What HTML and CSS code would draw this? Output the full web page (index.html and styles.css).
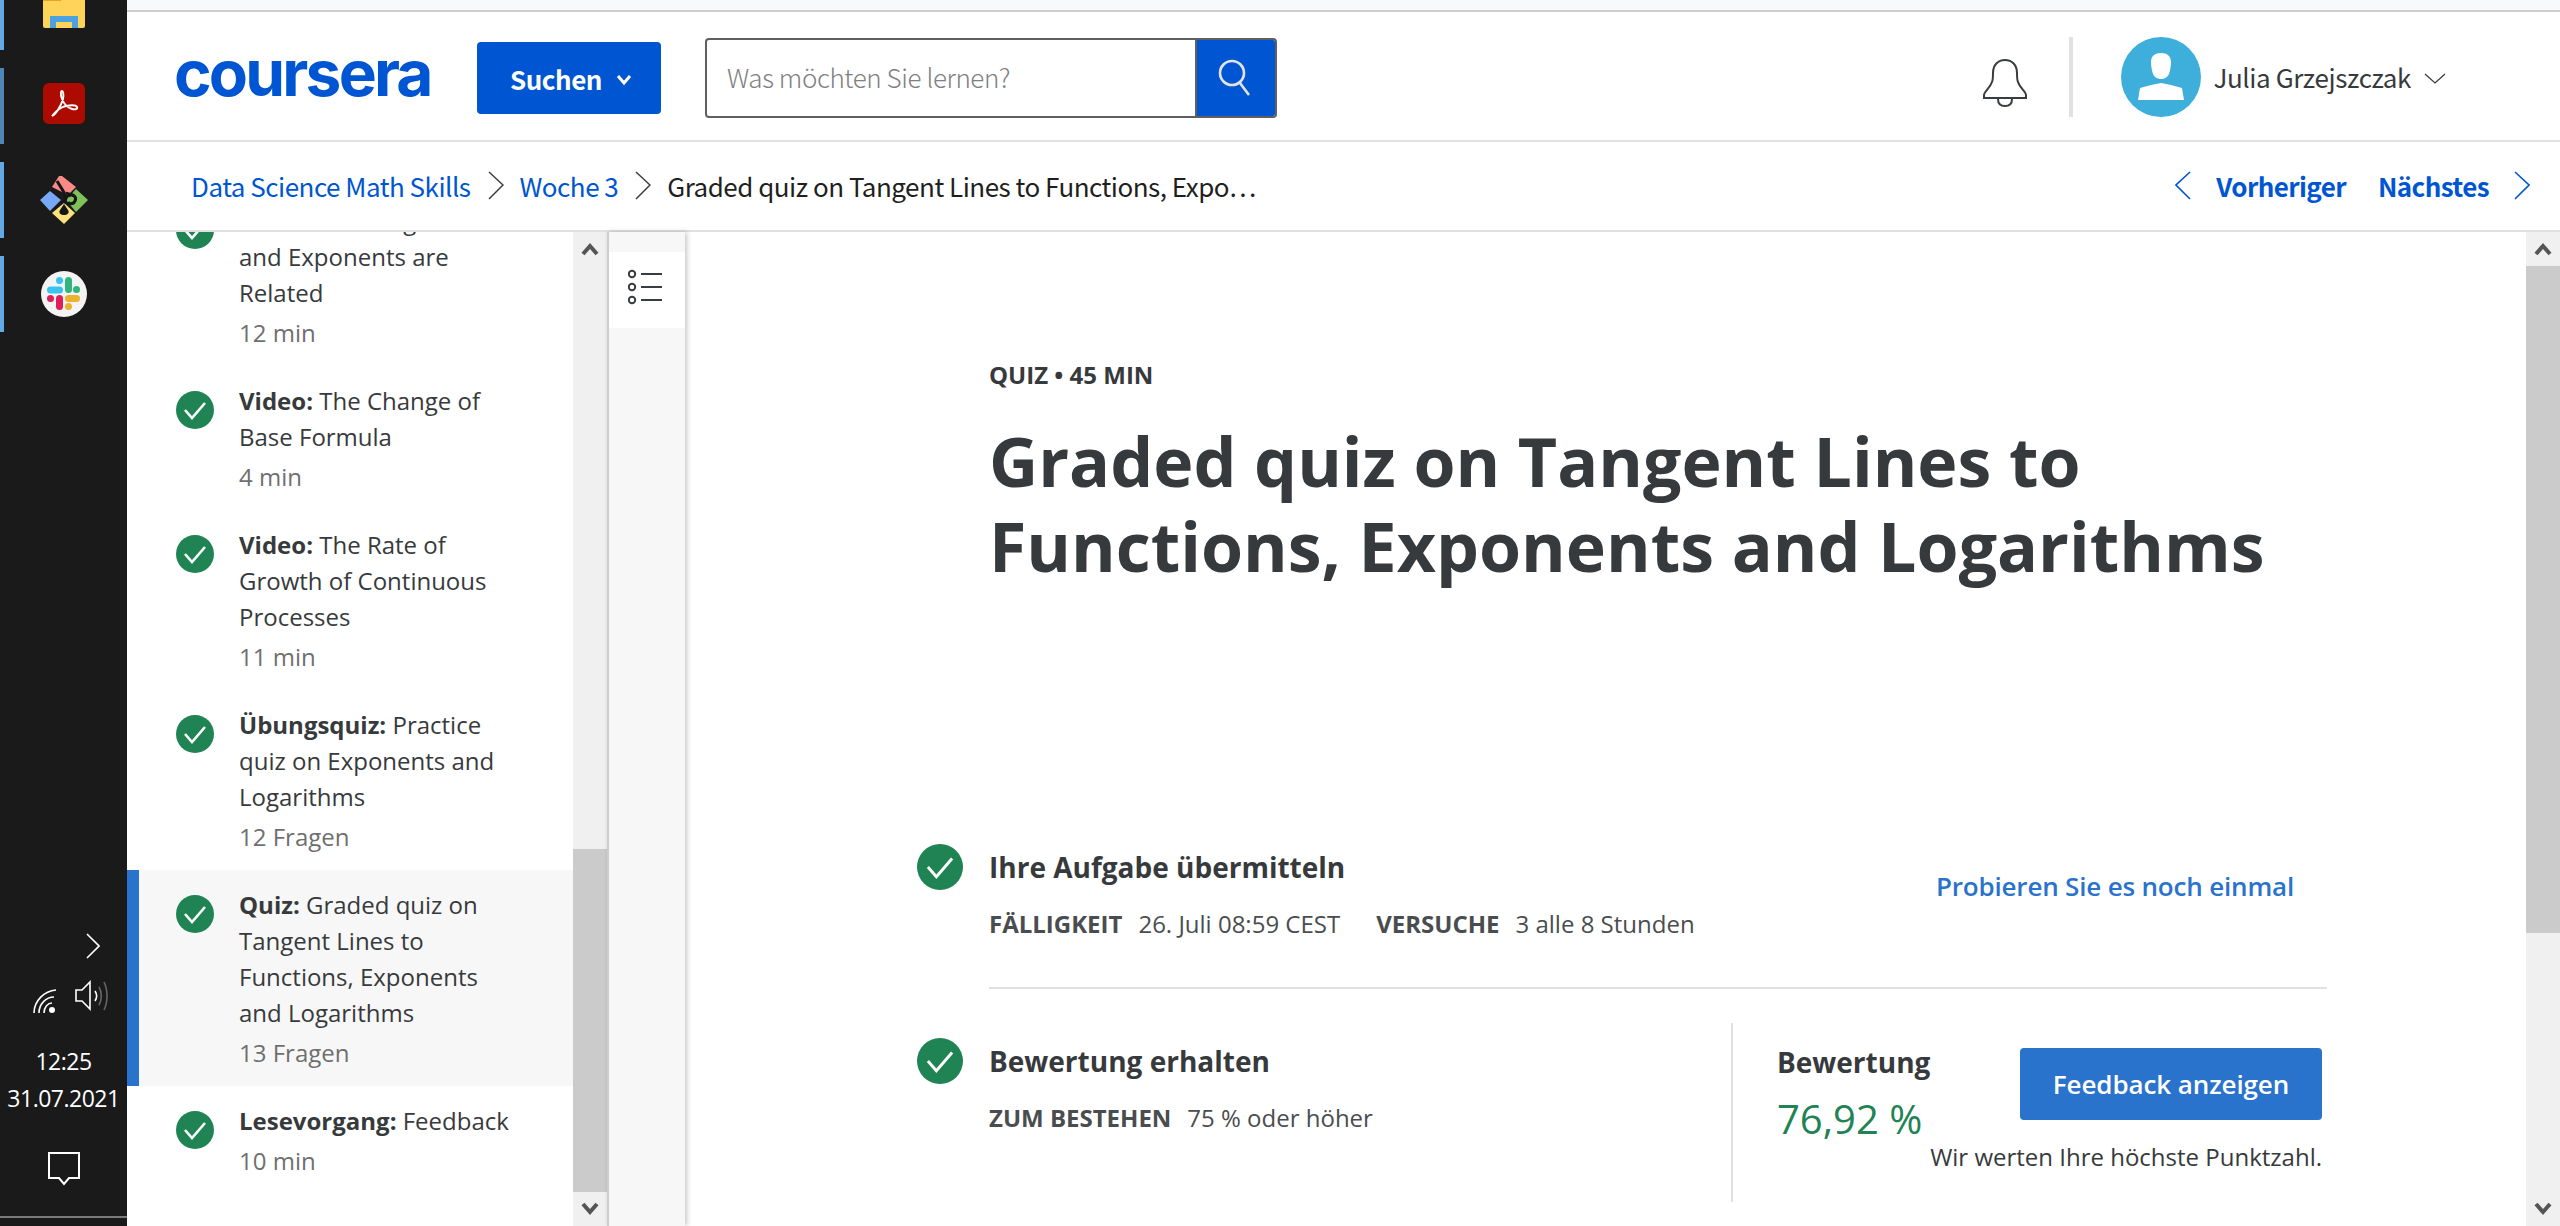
FILE: index.html
```html
<!DOCTYPE html>
<html lang="de">
<head>
<meta charset="utf-8">
<title>Graded quiz on Tangent Lines to Functions, Exponents and Logarithms</title>
<link rel="stylesheet" href="styles.css">
</head>
<body>
<div class="desktop">
  <aside class="taskbar">
    <div class="pins">
      <div class="pin pin-first">
        <svg class="ic-explorer" viewBox="0 0 42 28"><rect y="-4" width="42" height="32" rx="2" fill="#fdd35a"/><rect y="-4" width="18" height="5" fill="#e6a520"/><path d="M7 28V16h28v12h-6V22H13v6z" fill="#4aa3e0"/></svg>
      </div>
      <div class="pin pin-dark">
        <svg class="ic-pdf" viewBox="0 0 42 41"><rect width="42" height="41" rx="6" fill="#ad0b00"/><path d="M9 33c4-2 9-10 11-17 1-5 0-8-1-8s-2 3 0 8c2 5 6 9 10 10 3 1 6 0 5-2s-6-2-11-1c-5 1-10 5-14 10z" fill="none" stroke="#fff" stroke-width="1.9"/></svg>
      </div>
      <div class="pin">
        <svg class="ic-diamond" viewBox="0 0 48 48"><path d="M19 0h3l14 11-8 8-16-8z" fill="#f98a86"/><path d="M36 13l12 11-12 12-10-12z" fill="#7fc25a"/><path d="M10 15l11 9-11 11L0 24z" fill="#79a9f5"/><path d="M24 27l11 10-11 11-12-11z" fill="#fde27c"/><path d="M17 5l8 13" stroke="#161616" stroke-width="3" fill="none"/><path d="M24 18c3 2 3 5 0 9M26 17c3 1 6 1 8 3" stroke="#161616" stroke-width="2.5" fill="none"/><path d="M24 28l4 6c2 3-1 5-4 5s-6-2-4-5z" fill="#161616"/><path d="M28 20c5-3 9 1 7 5s-6 3-7 1" fill="none" stroke="#161616" stroke-width="3"/></svg>
      </div>
      <div class="pin">
        <svg class="ic-slack" viewBox="0 0 46 46"><circle cx="23" cy="23" r="23" fill="#f4f4f4"/><g stroke-width="7" stroke-linecap="round" fill="none"><path d="M9.500 19H18.500" stroke="#36c5f0"/><path d="M18.500 9.500v.1" stroke="#36c5f0"/><path d="M27.500 9.500V18.500" stroke="#2eb67d"/><path d="M35.500 18.500v.1" stroke="#2eb67d"/><path d="M27.500 27.500H35.500" stroke="#ecb22e"/><path d="M27.500 35.500v.1" stroke="#ecb22e"/><path d="M18.500 27.500V35.500" stroke="#e01e5a"/><path d="M9.500 27.500v.1" stroke="#e01e5a"/></g></svg>
      </div>
    </div>
    <div class="tray">
      <svg class="ic-tray-chevron" viewBox="0 0 14 26"><path d="M1 1l12 12L1 25" fill="none" stroke="#fff" stroke-width="1.6"/></svg>
      <div class="tray-icons">
        <svg class="ic-wifi" viewBox="0 0 26 26"><g fill="none" stroke="#fff" stroke-width="1.6"><path d="M2 25C2 13 12 3 24 2"/><path d="M7 25c0-9 7-16 15-16"/><path d="M12 25c0-6 4-10 8-10"/></g><circle cx="20" cy="22" r="3" fill="#fff"/></svg>
        <svg class="ic-sound" viewBox="0 0 34 32"><path d="M2 10h6l8-8v27l-8-8H2z" fill="none" stroke="#fff" stroke-width="1.6"/><path d="M21 11c2 3 2 7 0 10" fill="none" stroke="#fff" stroke-width="1.6"/><path d="M25 7c3 5 3 13 0 18M30 2c4 8 4 20 0 28" fill="none" stroke="#666" stroke-width="1.6"/></svg>
      </div>
      <div class="clock clock-time">12:25</div>
      <div class="clock date">31.07.2021</div>
      <svg class="ic-notify" viewBox="0 0 32 34"><path d="M1 1h30v25H21l-5 6-5-6H1z" fill="none" stroke="#fff" stroke-width="2"/></svg>
    </div>
    <div class="taskbar-line"></div>
  </aside>

  <div class="window">
    <div class="strip"></div>
    <header class="topbar">
      <span class="logo">coursera</span>
      <button class="explore">Suchen <svg class="ic-caret" viewBox="0 0 16 12"><path d="M2 2l6 7 6-7" fill="none" stroke="#fff" stroke-width="3"/></svg></button>
      <div class="search">
        <span class="search-text">Was möchten Sie lernen?</span>
        <span class="search-btn"><svg class="ic-search" viewBox="0 0 32 38"><circle cx="14" cy="14" r="12" fill="none" stroke="#e4e4e4" stroke-width="2.6"/><path d="M22 24l9 12" stroke="#e4e4e4" stroke-width="2.6"/></svg></span>
      </div>
      <div class="spacer"></div>
      <svg class="ic-bell" viewBox="0 0 44 48"><path d="M1 39h42v-3c0-3-6-7-8-13-1-2-1-4-1-9C34 6 29 1 22 1S10 6 10 14c0 5 0 7-1 9-2 6-8 10-8 13z" fill="#fff" stroke="#3a3d40" stroke-width="2"/><path d="M15 40c0 5 3 7 7 7s7-2 7-7" fill="none" stroke="#3a3d40" stroke-width="2"/></svg>
      <div class="vrule"></div>
      <div class="avatar"><svg viewBox="0 0 80 80"><circle cx="40" cy="40" r="40" fill="#3eaedb"/><path d="M40 16c6 0 10 3 10 9 0 4-1 9-2 12-1 3-5 5-8 5s-7-2-8-5c-1-3-2-8-2-12 0-6 4-9 10-9zM17 63l2-12 11-3 10-2 10 2 11 3 2 12z" fill="#fff"/></svg></div>
      <span class="user">Julia Grzejszczak</span>
      <svg class="ic-userchev" viewBox="0 0 22 11"><path d="M1 1l10 9 10-9" fill="none" stroke="#3a3d40" stroke-width="1.3"/></svg>
    </header>
    <nav class="crumbs">
      <a class="crumb">Data Science Math Skills</a>
      <svg class="ic-sep" viewBox="0 0 16 29"><path d="M1 1l14 13L1 28" fill="none" stroke="#3a3d40" stroke-width="1.5"/></svg>
      <a class="crumb">Woche 3</a>
      <svg class="ic-sep" viewBox="0 0 16 29"><path d="M1 1l14 13L1 28" fill="none" stroke="#3a3d40" stroke-width="1.5"/></svg>
      <span class="crumb-current">Graded quiz on Tangent Lines to Functions, Expo…</span>
      <div class="spacer"></div>
      <svg class="ic-nav" viewBox="0 0 16 29"><path d="M15 1L1 14l14 14" fill="none" stroke="#0056d2" stroke-width="1.6"/></svg>
      <a class="nav-link nav-prev">Vorheriger</a>
      <a class="nav-link nav-next">Nächstes</a>
      <svg class="ic-nav" viewBox="0 0 16 29"><path d="M1 1l14 13L1 28" fill="none" stroke="#0056d2" stroke-width="1.6"/></svg>
    </nav>
    <div class="body">
      <div class="sidebar">
        <ul class="items">
          <li class="item">
            <span class="check"><svg viewBox="0 0 38 38"><path d="M9 19l7 8 13-15" fill="none" stroke="#fff" stroke-width="2.6"/></svg></span>
            <div><p class="item-title"><b>Video:</b> How Logarithms<br>and Exponents are<br>Related</p><p class="item-sub">12 min</p></div>
          </li>
          <li class="item">
            <span class="check"><svg viewBox="0 0 38 38"><path d="M9 19l7 8 13-15" fill="none" stroke="#fff" stroke-width="2.6"/></svg></span>
            <div><p class="item-title"><b>Video:</b> The Change of<br>Base Formula</p><p class="item-sub">4 min</p></div>
          </li>
          <li class="item">
            <span class="check"><svg viewBox="0 0 38 38"><path d="M9 19l7 8 13-15" fill="none" stroke="#fff" stroke-width="2.6"/></svg></span>
            <div><p class="item-title"><b>Video:</b> The Rate of<br>Growth of Continuous<br>Processes</p><p class="item-sub">11 min</p></div>
          </li>
          <li class="item">
            <span class="check"><svg viewBox="0 0 38 38"><path d="M9 19l7 8 13-15" fill="none" stroke="#fff" stroke-width="2.6"/></svg></span>
            <div><p class="item-title"><b>Übungsquiz:</b> Practice<br>quiz on Exponents and<br>Logarithms</p><p class="item-sub">12 Fragen</p></div>
          </li>
          <li class="item item-active">
            <span class="check"><svg viewBox="0 0 38 38"><path d="M9 19l7 8 13-15" fill="none" stroke="#fff" stroke-width="2.6"/></svg></span>
            <div><p class="item-title"><b>Quiz:</b> Graded quiz on<br>Tangent Lines to<br>Functions, Exponents<br>and Logarithms</p><p class="item-sub">13 Fragen</p></div>
          </li>
          <li class="item">
            <span class="check"><svg viewBox="0 0 38 38"><path d="M9 19l7 8 13-15" fill="none" stroke="#fff" stroke-width="2.6"/></svg></span>
            <div><p class="item-title"><b>Lesevorgang:</b> Feedback</p><p class="item-sub">10 min</p></div>
          </li>
        </ul>
      </div>
      <div class="scroll scroll-side">
        <div class="sbtn"><svg viewBox="0 0 18 14"><path d="M2 12l7-8 7 8" fill="none" stroke="#555" stroke-width="4"/></svg></div>
        <div class="track-gap-side"></div>
        <div class="thumb thumb-side"></div>
        <div class="sbtn"><svg viewBox="0 0 18 14"><path d="M2 2l7 8 7-8" fill="none" stroke="#555" stroke-width="4"/></svg></div>
      </div>
      <div class="rail">
        <div class="rail-btn"><svg class="ic-list" viewBox="0 0 34 36"><g fill="none" stroke="#3a3d40" stroke-width="2"><circle cx="4" cy="5" r="3.2"/><circle cx="4" cy="18" r="3.2"/><circle cx="4" cy="31" r="3.2"/><path d="M13 5h21M13 18h21M13 31h21"/></g></svg></div>
      </div>
      <main class="content">
        <p class="eyebrow">QUIZ • 45 MIN</p>
        <h1 class="title">Graded quiz on Tangent Lines to<br>Functions, Exponents and Logarithms</h1>
        <section class="step step-one">
          <span class="check check-lg"><svg viewBox="0 0 38 38"><path d="M9 19l7 8 13-15" fill="none" stroke="#fff" stroke-width="2.4"/></svg></span>
          <div class="step-body step-body-line">
            <div class="step-main">
              <h2 class="step-title">Ihre Aufgabe übermitteln</h2>
              <p class="meta"><b>FÄLLIGKEIT</b><span>26. Juli 08:59 CEST</span><b class="meta-next">VERSUCHE</b><span>3 alle 8 Stunden</span></p>
            </div>
            <a class="retry">Probieren Sie es noch einmal</a>
          </div>
        </section>
        <section class="step step-two">
          <span class="check check-lg"><svg viewBox="0 0 38 38"><path d="M9 19l7 8 13-15" fill="none" stroke="#fff" stroke-width="2.4"/></svg></span>
          <div class="step-body">
            <div class="step-main step-main-two">
              <h2 class="step-title">Bewertung erhalten</h2>
              <p class="meta"><b>ZUM BESTEHEN</b><span>75 % oder höher</span></p>
            </div>
            <div class="grade">
              <div class="grade-top">
                <div>
                  <h2 class="step-title">Bewertung</h2>
                  <p class="score">76,92 %</p>
                </div>
                <button class="feedback">Feedback anzeigen</button>
              </div>
              <p class="note">Wir werten Ihre höchste Punktzahl.</p>
            </div>
          </div>
        </section>
      </main>
      <div class="scroll scroll-main">
        <div class="sbtn"><svg viewBox="0 0 18 14"><path d="M2 12l7-8 7 8" fill="none" stroke="#555" stroke-width="4"/></svg></div>
        <div class="thumb thumb-main"></div>
        <div class="track-gap-main"></div>
        <div class="sbtn"><svg viewBox="0 0 18 14"><path d="M2 2l7 8 7-8" fill="none" stroke="#555" stroke-width="4"/></svg></div>
      </div>
    </div>
  </div>
</div>
</body>
</html>
```
FILE: styles.css
```css
* { box-sizing: border-box; }
html, body { margin: 0; height: 100%; overflow: hidden; }
body { font-family: "Open Sans", sans-serif; color: #373a3c; background: #fff; }
p, h1, h2, ul { margin: 0; padding: 0; }
svg { display: block; flex: none; }
.desktop { display: flex; height: 1226px; }

.taskbar { width: 127px; flex: none; background: #1a1a1a; display: flex; flex-direction: column; color: #fff; }
.pins { display: flex; flex-direction: column; gap: 18px; }
.pin { height: 76px; border-left: 4px solid #63a9e6; display: flex; align-items: center; justify-content: center; padding-right: 4px; }
.pin-first { height: 50px; align-items: flex-start; }
.pin-dark { border-left-color: #4f86b8; padding-bottom: 5px; }
.ic-explorer { width: 42px; height: 28px; }
.ic-pdf { width: 42px; height: 41px; }
.ic-diamond { width: 48px; height: 48px; }
.ic-slack { width: 46px; height: 46px; }
.tray { margin-top: 601px; display: flex; flex-direction: column; align-items: center; }
.ic-tray-chevron { width: 14px; height: 26px; margin-left: 58px; }
.tray-icons { display: flex; gap: 16px; margin-top: 19px; align-items: flex-end; height: 36px; margin-left: 12px; }
.ic-wifi { width: 26px; height: 26px; }
.ic-sound { width: 34px; height: 36px; }
.clock { font-size: 23px; line-height: 36px; letter-spacing: -0.5px; }
.clock-time { margin-top: 29px; }
.date { margin-top: 1px; }
.ic-notify { width: 32px; height: 34px; margin-top: 36px; }
.taskbar-line { height: 2px; background: #7a7a7a; margin-top: 30px; }

.window { flex: 1; min-width: 0; display: flex; flex-direction: column; }
.strip { height: 12px; flex: none; background: #f8f9fb; border-bottom: 2px solid #cdcdcd; }
.topbar, .crumbs, .crumb-current, .crumb, .nav-link, .user, .search-text, .explore { font-family: "Noto Sans CJK JP", "Noto Sans", sans-serif; }
.topbar { height: 130px; flex: none; border-bottom: 2px solid #e1e1e1; display: flex; align-items: flex-start; padding-top: 25px; }
.logo { font-family: Inter, sans-serif; font-weight: 700; font-size: 64px; line-height: 72px; letter-spacing: -2.8px; color: #0056d2; margin-left: 47px; width: 303px; }
.explore { width: 184px; height: 72px; margin-top: 5px; background: #0056d2; color: #fff; border: 0; border-radius: 4px; font-size: 26px; font-weight: 700; letter-spacing: -0.5px; display: flex; align-items: center; justify-content: center; gap: 14px; padding: 0 0 0 4px; }
.ic-caret { width: 16px; height: 12px; margin-top: 3px; }
.search { width: 572px; height: 80px; margin-left: 44px; margin-top: 1px; border: 2px solid #5f5f5f; border-radius: 4px; display: flex; overflow: hidden; }
.search-text { flex: 1; padding-left: 20px; font-size: 26px; font-weight: 300; letter-spacing: -0.42px; line-height: 74px; color: #808080; }
.search-btn { width: 80px; background: #0056d2; border-left: 2px solid #5f5f5f; display: flex; align-items: center; justify-content: center; padding-right: 4px; }
.ic-search { width: 32px; height: 38px; }
.spacer { flex: 1; }
.ic-bell { width: 44px; height: 48px; margin-top: 22px; }
.vrule { width: 4px; height: 80px; margin: 0 48px 0 42px; background: #e1e1e1; }
.avatar { width: 80px; height: 80px; }
.user { font-size: 26px; letter-spacing: -0.4px; line-height: 80px; margin-left: 12px; color: #373a3c; }
.ic-userchev { width: 22px; height: 11px; margin: 36px 114px 0 13px; }

.crumbs { height: 90px; flex: none; border-bottom: 2px solid #e1e1e1; display: flex; align-items: center; font-size: 26px; letter-spacing: -0.5px; padding: 0 30px 2px 64px; }
.crumb { color: #0056d2; }
.ic-sep { width: 16px; height: 29px; margin: 0 16px 0 17px; }
.crumb-current { color: #1f1f1f; }
.ic-nav { width: 16px; height: 29px; }
.nav-link { color: #0056d2; font-weight: 700; letter-spacing: -0.6px; }
.nav-prev { margin-left: 25px; }
.nav-next { margin: 0 25px 0 32px; }

.body { flex: 1; min-height: 0; display: flex; }
.sidebar { width: 446px; flex: none; overflow: hidden; }
.items { list-style: none; margin-top: -46px; }
.item { display: flex; gap: 26px; padding: 17px 20px 17px 49px; }
.item-active { background: #f7f7f7; border-left: 12px solid #2a73cc; padding-left: 37px; }
.check { width: 38px; height: 38px; flex: none; border-radius: 50%; background: #1f8354; margin-top: 8px; }
.item-title { font-size: 24px; line-height: 36px; white-space: nowrap; margin-left: -1px; }
.item-title b { font-weight: 700; }
.item-sub { font-size: 24px; line-height: 32px; margin: 6px 0 0 -1px; color: #6f6f6f; }

.scroll { width: 34px; flex: none; display: flex; flex-direction: column; background: #f0f0f0; }
.sbtn { height: 34px; flex: none; display: flex; align-items: center; justify-content: center; background: #f0f0f0; }
.sbtn svg { width: 18px; height: 14px; }
.track-gap-side { height: 583px; }
.thumb { background: #cbcbcb; }
.thumb-side { flex: 1; }
.thumb-main { height: 667px; }
.track-gap-main { flex: 1; }

.rail { width: 78px; flex: none; border-left: 2px solid #cdcdcd; background: #f7f7f7; box-shadow: 2px 0 5px rgba(0,0,0,.22); z-index: 1; padding-top: 20px; }
.rail-btn { height: 76px; background: #fff; display: flex; align-items: center; justify-content: center; padding: 0 5px 7px 0; }
.ic-list { width: 34px; height: 36px; }

.content { flex: 1; min-width: 0; padding: 129px 0 0 232px; }
.eyebrow { font-size: 24px; font-weight: 700; line-height: 28px; margin-left: 72px; color: #373a3c; }
.title { font-size: 68px; font-weight: 700; line-height: 85px; margin: 29px 0 0 72px; white-space: nowrap; }
.step { display: flex; gap: 26px; width: 1410px; }
.step-one { margin-top: 256px; }
.step-two { margin-top: 49px; }
.check-lg { width: 46px; height: 46px; margin-top: 0; }
.step-body { flex: 1; display: flex; }
.step-body-line { border-bottom: 2px solid #e1e1e1; height: 145px; }
.step-main { flex: 1; }
.step-title { font-size: 28px; font-weight: 700; line-height: 44px; margin-top: 1px; }
.meta { font-size: 24px; line-height: 36px; margin-top: 17px; color: #4a4d50; white-space: nowrap; }
.meta b { font-weight: 700; margin-right: 16px; }
.meta .meta-next { margin-left: 36px; }
.retry { font-size: 26px; font-weight: 600; letter-spacing: -0.18px; color: #2a73cc; line-height: 36px; margin: 24px 33px 0 0; }
.step-main-two { flex: none; width: 742px; }
.grade { flex: 1; height: 179px; margin-top: -15px; border-left: 2px solid #e1e1e1; padding: 16px 5px 0 44px; }
.grade-top { display: flex; justify-content: space-between; align-items: flex-start; }
.score { font-size: 40px; line-height: 54px; color: #1f8354; margin-top: 8px; }
.feedback { width: 302px; height: 72px; border: 0; border-radius: 4px; background: #2a73cc; color: #fff; font: 600 26px "Open Sans", sans-serif; letter-spacing: -0.1px; padding: 0; margin-top: 9px; }
.note { font-size: 24px; line-height: 32px; text-align: right; margin-top: -5px; white-space: nowrap; color: #373a3c; }
```
